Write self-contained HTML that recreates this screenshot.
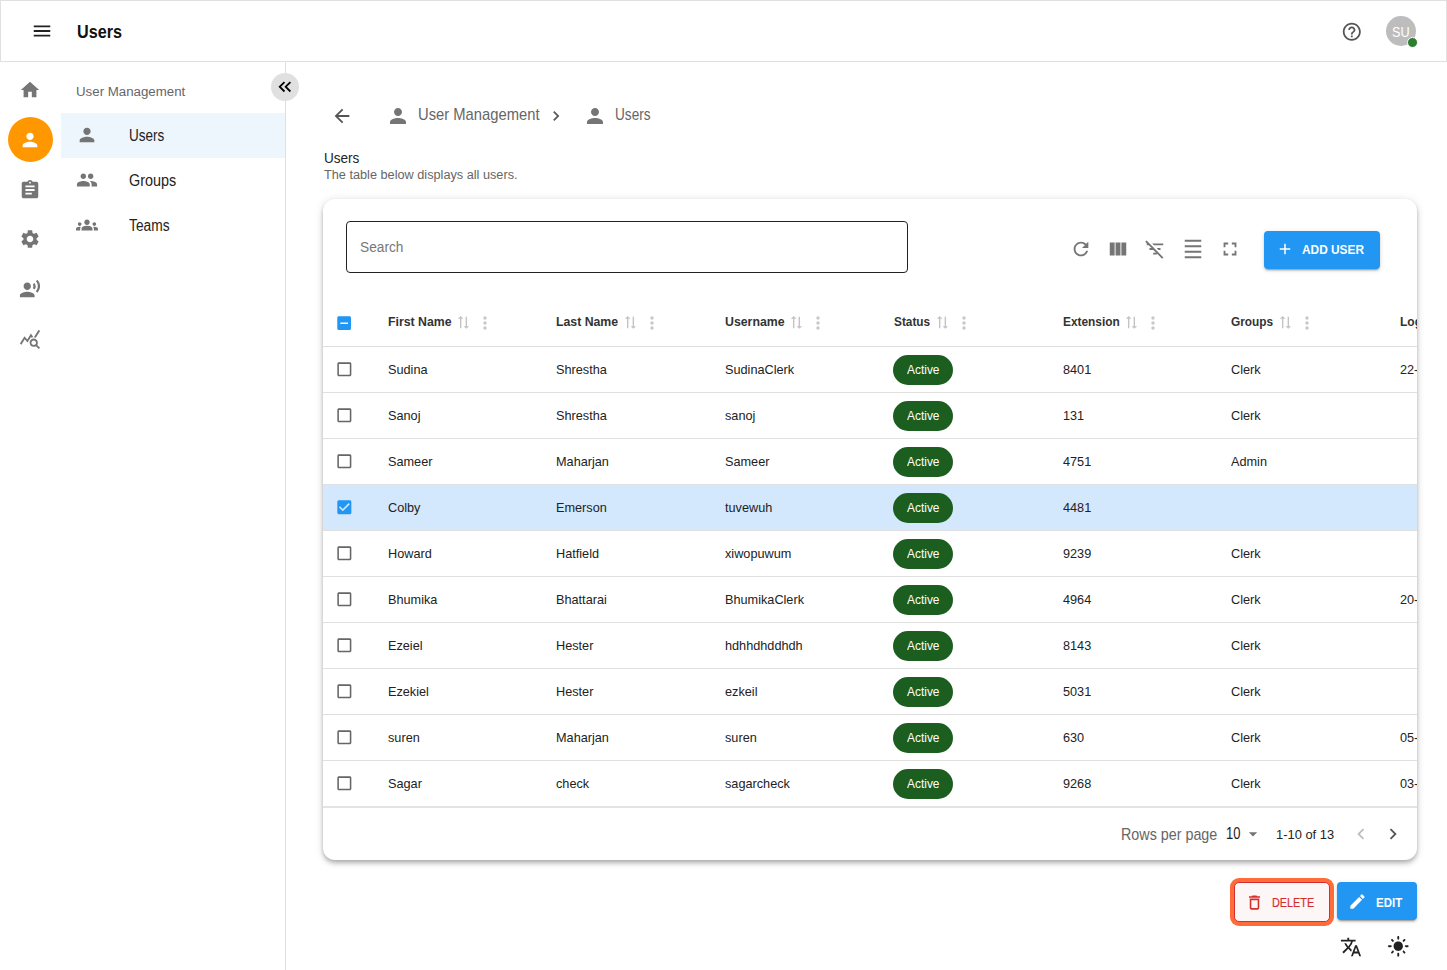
<!DOCTYPE html><html><head><meta charset="utf-8"><title>Users</title><style>
html,body{margin:0;padding:0;width:1447px;height:970px;overflow:hidden;background:#fff;}
body{font-family:"Liberation Sans",sans-serif;position:relative;}
.ic{position:absolute;display:block;}
.t{position:absolute;white-space:nowrap;}
.box{position:absolute;box-sizing:border-box;}
</style></head><body>
<div class="box" style="left:0;top:0;width:1447px;height:62px;border:1px solid #e0e0e0;"></div>
<svg class="ic" style="left:31.00px;top:20.00px;width:22px;height:22px;" viewBox="0 0 24 24"><path fill="#222" d="M3 18h18v-2H3v2zm0-5h18v-2H3v2zm0-7v2h18V6H3z"/></svg>
<div class="t" style="left:77.00px;top:23.36px;font-size:18.46px;line-height:18.46px;color:#111;font-weight:700;transform:scaleX(0.8769);transform-origin:0 0;">Users</div>
<svg class="ic" style="left:1341.20px;top:20.50px;width:21.6px;height:21.6px;" viewBox="0 0 24 24"><path fill="#555" d="M11 18h2v-2h-2v2zm1-16C6.48 2 2 6.48 2 12s4.48 10 10 10 10-4.48 10-10S17.52 2 12 2zm0 18c-4.41 0-8-3.59-8-8s3.59-8 8-8 8 3.59 8 8-3.59 8-8 8zm0-14c-2.21 0-4 1.79-4 4h2c0-1.1.9-2 2-2s2 .9 2 2c0 2-3 1.75-3 5h2c0-2.25 3-2.5 3-5 0-2.21-1.79-4-4-4z"/></svg>
<div class="box" style="left:1386px;top:16px;width:30px;height:30px;border-radius:50%;background:#bdbdbd;"></div>
<div class="t" style="left:1392.00px;top:25.32px;font-size:14.97px;line-height:14.97px;color:#fff;font-weight:400;transform:scaleX(0.8464);transform-origin:0 0;">SU</div>
<div class="box" style="left:1406.5px;top:36.5px;width:11px;height:11px;border-radius:50%;background:#2e7d32;border:1px solid #fff;"></div>
<svg class="ic" style="left:19.00px;top:79.00px;width:22px;height:22px;" viewBox="0 0 24 24"><path fill="#757575" d="M10 20v-6h4v6h5v-8h3L12 3 2 12h3v8z"/></svg>
<div class="box" style="left:8px;top:117px;width:45px;height:45px;border-radius:50%;background:#ff9800;"></div>
<svg class="ic" style="left:19.10px;top:129.20px;width:22px;height:22px;" viewBox="0 0 24 24"><path fill="#fff" d="M12 12c2.21 0 4-1.79 4-4s-1.79-4-4-4-4 1.79-4 4 1.79 4 4 4zm0 2c-2.67 0-8 1.34-8 4v2h16v-2c0-2.66-5.33-4-8-4z"/></svg>
<svg class="ic" style="left:19.10px;top:178.50px;width:22px;height:22px;" viewBox="0 0 24 24"><path fill="#757575" d="M19 3h-4.18C14.4 1.840 13.3 1 12 1c-1.3 0-2.4.84-2.82 2H5c-1.1 0-2 .9-2 2v14c0 1.1.9 2 2 2h14c1.1 0 2-.9 2-2V5c0-1.1-.9-2-2-2zm-7 0c.55 0 1 .45 1 1s-.45 1-1 1-1-.45-1-1 .45-1 1-1zm2 14H7v-2h7v2zm3-4H7v-2h10v2zm0-4H7V7h10v2z"/></svg>
<svg class="ic" style="left:19.10px;top:228.00px;width:22px;height:22px;" viewBox="0 0 24 24"><path fill="#757575" d="M19.14 12.94c.04-.3.06-.61.06-.94 0-.32-.02-.64-.07-.94l2.03-1.58c.18-.14.23-.41.12-.61l-1.92-3.32c-.12-.22-.37-.29-.59-.22l-2.39.96c-.5-.38-1.03-.7-1.62-.94l-.36-2.54c-.04-.24-.24-.41-.48-.41h-3.84c-.24 0-.43.17-.47.41l-.36 2.54c-.59.24-1.130.57-1.62.94l-2.39-.96c-.22-.08-.47 0-.59.22L2.74 8.87c-.12.21-.08.47.12.61l2.03 1.58c-.05.3-.09.63-.09.94s.02.64.07.94l-2.03 1.58c-.18.14-.23.41-.12.61l1.92 3.32c.12.22.37.29.59.22l2.39-.96c.5.38 1.03.7 1.62.94l.36 2.54c.05.24.24.41.48.41h3.84c.24 0 .44-.17.47-.41l.36-2.54c.59-.24 1.13-.56 1.62-.94l2.39.96c.22.08.47 0 .59-.22l1.92-3.32c.12-.22.07-.47-.12-.61l-2.01-1.58zM12 15.6c-1.98 0-3.6-1.62-3.6-3.6s1.62-3.6 3.6-3.6 3.6 1.62 3.6 3.6-1.62 3.6-3.6 3.6z"/></svg>
<svg class="ic" style="left:19.00px;top:278.20px;width:22px;height:22px;" viewBox="0 0 24 24"><path fill="#757575" d="M9 13c2.21 0 4-1.79 4-4s-1.79-4-4-4-4 1.79-4 4 1.79 4 4 4zm0 2c-2.67 0-8 1.34-8 4v2h16v-2c0-2.66-5.33-4-8-4zm7.76-9.64l-1.68 1.69c.84 1.18.84 2.71 0 3.89l1.68 1.69c2.02-2.02 2.02-5.07 0-7.27zM20.07 2l-1.63 1.63c2.77 3.02 2.77 7.56 0 10.74L20.07 16c3.9-3.89 3.91-9.95 0-14z"/></svg>
<svg class="ic" style="left:19.00px;top:328.20px;width:22px;height:22px;" viewBox="0 0 24 24"><path fill="#757575" d="M19.88 18.47c.44-.7.7-1.51.7-2.39 0-2.49-2.01-4.5-4.5-4.5s-4.5 2.01-4.5 4.5 2.01 4.5 4.49 4.5c.88 0 1.7-.26 2.39-.7L21.58 23 23 21.58l-3.12-3.11zm-3.8.11c-1.38 0-2.5-1.12-2.5-2.5s1.12-2.5 2.5-2.5 2.5 1.12 2.5 2.5-1.12 2.5-2.5 2.5zm-.36-8.5c-.74.02-1.45.18-2.1.45l-.55-.83-3.8 6.18-3.01-3.52-3.63 5.81L1 17l5-8 3 3.5L13 6l2.72 4.08zm2.59.5c-.64-.28-1.33-.45-2.05-.49L21.38 2 23 3.18l-4.69 7.4z"/></svg>
<div class="box" style="left:285px;top:62px;width:1px;height:908px;background:#e0e0e0;"></div>
<div class="t" style="left:76.30px;top:84.55px;font-size:13.52px;line-height:13.52px;color:#666;font-weight:400;transform:scaleX(0.9830);transform-origin:0 0;">User Management</div>
<div class="box" style="left:61px;top:113px;width:224px;height:45px;background:#edf5fd;"></div>
<svg class="ic" style="left:76.00px;top:124.00px;width:22px;height:22px;" viewBox="0 0 24 24"><path fill="#757575" d="M12 12c2.21 0 4-1.79 4-4s-1.79-4-4-4-4 1.79-4 4 1.79 4 4 4zm0 2c-2.67 0-8 1.34-8 4v2h16v-2c0-2.66-5.33-4-8-4z"/></svg>
<div class="t" style="left:128.90px;top:128.38px;font-size:15.84px;line-height:15.84px;color:#222;font-weight:400;transform:scaleX(0.8558);transform-origin:0 0;">Users</div>
<svg class="ic" style="left:76.00px;top:169.00px;width:22px;height:22px;" viewBox="0 0 24 24"><path fill="#757575" d="M16 11c1.66 0 2.99-1.34 2.99-3S17.66 5 16 5c-1.66 0-3 1.34-3 3s1.34 3 3 3zm-8 0c1.66 0 2.99-1.34 2.99-3S9.66 5 8 5C6.34 5 5 6.34 5 8s1.34 3 3 3zm0 2c-2.33 0-7 1.17-7 3.5V19h14v-2.5c0-2.33-4.67-3.5-7-3.5zm8 0c-.29 0-.62.02-.97.05 1.16.84 1.97 1.97 1.97 3.45V19h6v-2.5c0-2.33-4.67-3.5-7-3.5z"/></svg>
<div class="t" style="left:128.90px;top:173.38px;font-size:15.84px;line-height:15.84px;color:#222;font-weight:400;transform:scaleX(0.9105);transform-origin:0 0;">Groups</div>
<svg class="ic" style="left:76.00px;top:214.00px;width:22px;height:22px;" viewBox="0 0 24 24"><path fill="#757575" d="M12 12.75c1.63 0 3.07.39 4.24.9 1.08.48 1.76 1.56 1.76 2.73V18H6v-1.61c0-1.18.68-2.26 1.76-2.73 1.17-.52 2.61-.91 4.240-.91zM4 13c1.1 0 2-.9 2-2s-.9-2-2-2-2 .9-2 2 .9 2 2 2zm1.13 1.1c-.37-.06-.74-.1-1.13-.1-.99 0-1.93.21-2.78.58C.48 14.9 0 15.62 0 16.43V18h4.5v-1.61c0-.83.23-1.61.63-2.29zM20 13c1.1 0 2-.9 2-2s-.9-2-2-2-2 .9-2 2 .9 2 2 2zm4 3.43c0-.81-.48-1.53-1.22-1.85-.85-.37-1.79-.58-2.78-.58-.39 0-.76.04-1.13.1.4.68.63 1.46.63 2.29V18H24v-1.57zM12 6c1.66 0 3 1.34 3 3s-1.34 3-3 3-3-1.34-3-3 1.34-3 3-3z"/></svg>
<div class="t" style="left:129.00px;top:218.38px;font-size:15.84px;line-height:15.84px;color:#222;font-weight:400;transform:scaleX(0.8702);transform-origin:0 0;">Teams</div>
<div class="box" style="left:271px;top:73px;width:28px;height:28px;border-radius:50%;background:#e0e0e0;"></div>
<svg class="ic" style="left:274.25px;top:76.25px;width:21.5px;height:21.5px;" viewBox="0 0 24 24"><path fill="#000" d="M17.59 18 19 16.59 14.42 12 19 7.41 17.59 6l-6 6zM11 18l1.41-1.41L7.83 12l4.58-4.59L11 6l-6 6z"/></svg>
<svg class="ic" style="left:331.00px;top:105.00px;width:22px;height:22px;" viewBox="0 0 24 24"><path fill="#555" d="M20 11H7.83l5.59-5.59L12 4l-8 8 8 8 1.41-1.41L7.83 13H20v-2z"/></svg>
<svg class="ic" style="left:386.30px;top:104.20px;width:24px;height:24px;" viewBox="0 0 24 24"><path fill="#757575" d="M12 12c2.21 0 4-1.79 4-4s-1.79-4-4-4-4 1.79-4 4 1.79 4 4 4zm0 2c-2.67 0-8 1.34-8 4v2h16v-2c0-2.66-5.33-4-8-4z"/></svg>
<div class="t" style="left:417.50px;top:107.00px;font-size:15.70px;line-height:15.70px;color:#666;font-weight:400;transform:scaleX(0.9417);transform-origin:0 0;">User Management</div>
<svg class="ic" style="left:546.00px;top:106.00px;width:20px;height:20px;" viewBox="0 0 24 24"><path fill="#555" d="M10 6 8.59 7.41 13.17 12l-4.58 4.59L10 18l6-6z"/></svg>
<svg class="ic" style="left:583.00px;top:104.20px;width:24px;height:24px;" viewBox="0 0 24 24"><path fill="#757575" d="M12 12c2.21 0 4-1.79 4-4s-1.79-4-4-4-4 1.79-4 4 1.79 4 4 4zm0 2c-2.67 0-8 1.34-8 4v2h16v-2c0-2.66-5.33-4-8-4z"/></svg>
<div class="t" style="left:614.60px;top:107.00px;font-size:15.70px;line-height:15.70px;color:#666;font-weight:400;transform:scaleX(0.8686);transform-origin:0 0;">Users</div>
<div class="t" style="left:324.00px;top:150.51px;font-size:14.39px;line-height:14.39px;color:#222;font-weight:400;transform:scaleX(0.9422);transform-origin:0 0;">Users</div>
<div class="t" style="left:324.00px;top:167.52px;font-size:13.08px;line-height:13.08px;color:#666;font-weight:400;transform:scaleX(0.9717);transform-origin:0 0;">The table below displays all users.</div>
<div class="box" style="left:323px;top:199px;width:1094px;height:661px;border-radius:12px;background:#fff;box-shadow:0 2px 4px -1px rgba(0,0,0,0.2),0 4px 5px 0 rgba(0,0,0,0.14),0 1px 10px 0 rgba(0,0,0,0.12);overflow:hidden;" id="card">
<div class="box" style="left:23px;top:22px;width:562px;height:52px;border:1px solid #222;border-radius:4px;"></div>
<div class="t" style="left:36.50px;top:41.44px;font-size:14.83px;line-height:14.83px;color:#777;font-weight:400;transform:scaleX(0.9240);transform-origin:0 0;">Search</div>
<svg class="ic" style="left:746.50px;top:39.00px;width:22px;height:22px;" viewBox="0 0 24 24"><path fill="#757575" d="M17.65 6.35C16.2 4.9 14.21 4 12 4c-4.42 0-7.99 3.58-7.99 8s3.57 8 7.99 8c3.73 0 6.84-2.55 7.73-6h-2.08c-.82 2.33-3.04 4-5.65 4-3.310 0-6-2.69-6-6s2.69-6 6-6c1.66 0 3.14.69 4.22 1.78L13 11h7V4l-2.35 2.35z"/></svg>
<svg class="ic" style="left:784.00px;top:39.00px;width:22px;height:22px;" viewBox="0 0 24 24"><path fill="#757575" d="M14.67 5v14H9.33V5h5.34zm1 14H21V5h-5.33v14zm-7.34 0V5H3v14h5.33z"/></svg>
<svg class="ic" style="left:821.00px;top:39.00px;width:22px;height:22px;" viewBox="0 0 24 24"><path fill="#757575" d="M10.83 8H21V6H8.83l2 2zm5 5H18v-2h-4.17l2 2zM14 16.83V18h-4v-2h3.17l-3-3H6v-2h2.17l-3-3H3V6h.17L1.39 4.22 2.8 2.81l18.38 18.38-1.41 1.41L14 16.83z"/></svg>
<svg class="ic" style="left:859.00px;top:39.00px;width:22px;height:22px;" viewBox="0 0 24 24"><path fill="#757575" d="M3 2h18v2H3zm0 18h18v2H3zm0-6h18v2H3zm0-6h18v2H3z"/></svg>
<svg class="ic" style="left:896.00px;top:39.00px;width:22px;height:22px;" viewBox="0 0 24 24"><path fill="#757575" d="M7 14H5v5h5v-2H7v-3zm-2-4h2V7h3V5H5v5zm12 7h-3v2h5v-5h-2v3zM14 5v2h3v3h2V5h-5z"/></svg>
<div class="box" style="left:941px;top:32px;width:116px;height:38px;border-radius:4px;background:#2196f3;box-shadow:0 3px 1px -2px rgba(0,0,0,0.2),0 2px 2px 0 rgba(0,0,0,0.14),0 1px 5px 0 rgba(0,0,0,0.12);"></div>
<svg class="ic" style="left:953.00px;top:41.00px;width:18px;height:18px;" viewBox="0 0 24 24"><path fill="#fff" d="M19 13h-6v6h-2v-6H5v-2h6V5h2v6h6v2z"/></svg>
<div class="t" style="left:979.40px;top:45.19px;font-size:12.65px;line-height:12.65px;color:#fff;font-weight:700;transform:scaleX(0.9387);transform-origin:0 0;">ADD USER</div>
<svg class="ic" style="left:11.85px;top:114.65px;width:18.3px;height:18.3px;" viewBox="0 0 24 24"><path fill="#2196f3" d="M19 3H5c-1.1 0-2 .9-2 2v14c0 1.1.9 2 2 2h14c1.1 0 2-.9 2-2V5c0-1.1-.9-2-2-2zm-2 10H7v-2h10v2z"/></svg>
<div class="t" style="left:64.90px;top:116.91px;font-size:12.50px;line-height:12.50px;color:#333;font-weight:700;transform:scaleX(0.9845);transform-origin:0 0;">First Name</div>
<svg class="ic" style="left:132.00px;top:114.70px;width:17px;height:17px;transform:rotate(-90deg) scaleX(0.9);" viewBox="0 0 24 24"><path fill="#c4c4c4" d="M18 12l4-4-4-4v3H3v2h15zM6 12l-4 4 4 4v-3h15v-2H6z"/></svg>
<svg class="ic" style="left:152.10px;top:114.00px;width:20px;height:20px;" viewBox="0 0 24 24"><path fill="#c8c8c8" d="M12 8c1.1 0 2-.9 2-2s-.9-2-2-2-2 .9-2 2 .9 2 2 2zm0 2c-1.1 0-2 .9-2 2s.9 2 2 2 2-.9 2-2-.9-2-2-2zm0 6c-1.1 0-2 .9-2 2s.9 2 2 2 2-.9 2-2-.9-2-2-2z"/></svg>
<div class="t" style="left:233.40px;top:116.91px;font-size:12.50px;line-height:12.50px;color:#333;font-weight:700;transform:scaleX(0.9822);transform-origin:0 0;">Last Name</div>
<svg class="ic" style="left:299.00px;top:114.70px;width:17px;height:17px;transform:rotate(-90deg) scaleX(0.9);" viewBox="0 0 24 24"><path fill="#c4c4c4" d="M18 12l4-4-4-4v3H3v2h15zM6 12l-4 4 4 4v-3h15v-2H6z"/></svg>
<svg class="ic" style="left:319.10px;top:114.00px;width:20px;height:20px;" viewBox="0 0 24 24"><path fill="#c8c8c8" d="M12 8c1.1 0 2-.9 2-2s-.9-2-2-2-2 .9-2 2 .9 2 2 2zm0 2c-1.1 0-2 .9-2 2s.9 2 2 2 2-.9 2-2-.9-2-2-2zm0 6c-1.1 0-2 .9-2 2s.9 2 2 2 2-.9 2-2-.9-2-2-2z"/></svg>
<div class="t" style="left:401.70px;top:116.91px;font-size:12.50px;line-height:12.50px;color:#333;font-weight:700;transform:scaleX(0.9859);transform-origin:0 0;">Username</div>
<svg class="ic" style="left:464.80px;top:114.70px;width:17px;height:17px;transform:rotate(-90deg) scaleX(0.9);" viewBox="0 0 24 24"><path fill="#c4c4c4" d="M18 12l4-4-4-4v3H3v2h15zM6 12l-4 4 4 4v-3h15v-2H6z"/></svg>
<svg class="ic" style="left:484.90px;top:114.00px;width:20px;height:20px;" viewBox="0 0 24 24"><path fill="#c8c8c8" d="M12 8c1.1 0 2-.9 2-2s-.9-2-2-2-2 .9-2 2 .9 2 2 2zm0 2c-1.1 0-2 .9-2 2s.9 2 2 2 2-.9 2-2-.9-2-2-2zm0 6c-1.1 0-2 .9-2 2s.9 2 2 2 2-.9 2-2-.9-2-2-2z"/></svg>
<div class="t" style="left:570.90px;top:116.91px;font-size:12.50px;line-height:12.50px;color:#333;font-weight:700;transform:scaleX(0.9450);transform-origin:0 0;">Status</div>
<svg class="ic" style="left:610.50px;top:114.70px;width:17px;height:17px;transform:rotate(-90deg) scaleX(0.9);" viewBox="0 0 24 24"><path fill="#c4c4c4" d="M18 12l4-4-4-4v3H3v2h15zM6 12l-4 4 4 4v-3h15v-2H6z"/></svg>
<svg class="ic" style="left:630.60px;top:114.00px;width:20px;height:20px;" viewBox="0 0 24 24"><path fill="#c8c8c8" d="M12 8c1.1 0 2-.9 2-2s-.9-2-2-2-2 .9-2 2 .9 2 2 2zm0 2c-1.1 0-2 .9-2 2s.9 2 2 2 2-.9 2-2-.9-2-2-2zm0 6c-1.1 0-2 .9-2 2s.9 2 2 2 2-.9 2-2-.9-2-2-2z"/></svg>
<div class="t" style="left:739.50px;top:116.91px;font-size:12.50px;line-height:12.50px;color:#333;font-weight:700;transform:scaleX(0.9508);transform-origin:0 0;">Extension</div>
<svg class="ic" style="left:799.80px;top:114.70px;width:17px;height:17px;transform:rotate(-90deg) scaleX(0.9);" viewBox="0 0 24 24"><path fill="#c4c4c4" d="M18 12l4-4-4-4v3H3v2h15zM6 12l-4 4 4 4v-3h15v-2H6z"/></svg>
<svg class="ic" style="left:819.90px;top:114.00px;width:20px;height:20px;" viewBox="0 0 24 24"><path fill="#c8c8c8" d="M12 8c1.1 0 2-.9 2-2s-.9-2-2-2-2 .9-2 2 .9 2 2 2zm0 2c-1.1 0-2 .9-2 2s.9 2 2 2 2-.9 2-2-.9-2-2-2zm0 6c-1.1 0-2 .9-2 2s.9 2 2 2 2-.9 2-2-.9-2-2-2z"/></svg>
<div class="t" style="left:908.30px;top:116.91px;font-size:12.50px;line-height:12.50px;color:#333;font-weight:700;transform:scaleX(0.9494);transform-origin:0 0;">Groups</div>
<svg class="ic" style="left:954.00px;top:114.70px;width:17px;height:17px;transform:rotate(-90deg) scaleX(0.9);" viewBox="0 0 24 24"><path fill="#c4c4c4" d="M18 12l4-4-4-4v3H3v2h15zM6 12l-4 4 4 4v-3h15v-2H6z"/></svg>
<svg class="ic" style="left:974.10px;top:114.00px;width:20px;height:20px;" viewBox="0 0 24 24"><path fill="#c8c8c8" d="M12 8c1.1 0 2-.9 2-2s-.9-2-2-2-2 .9-2 2 .9 2 2 2zm0 2c-1.1 0-2 .9-2 2s.9 2 2 2 2-.9 2-2-.9-2-2-2zm0 6c-1.1 0-2 .9-2 2s.9 2 2 2 2-.9 2-2-.9-2-2-2z"/></svg>
<div class="t" style="left:1077.40px;top:116.91px;font-size:12.50px;line-height:12.50px;color:#333;font-weight:700;transform:scaleX(0.9600);transform-origin:0 0;">Login</div>
<div class="box" style="left:0;top:147px;width:1094px;height:1px;background:#e0e0e0;"></div>
<div class="box" style="left:0;top:193px;width:1094px;height:1px;background:#e0e0e0;"></div>
<svg class="ic" style="left:11.65px;top:161.15px;width:18.7px;height:18.7px;" viewBox="0 0 24 24"><path fill="#666" d="M19 5v14H5V5h14m0-2H5c-1.1 0-2 .9-2 2v14c0 1.1.9 2 2 2h14c1.1 0 2-.9 2-2V5c0-1.1-.9-2-2-2z"/></svg>
<div class="t" style="left:64.90px;top:163.67px;font-size:13.37px;line-height:13.37px;color:#222;font-weight:400;transform:scaleX(0.9500);transform-origin:0 0;">Sudina</div>
<div class="t" style="left:233.40px;top:163.67px;font-size:13.37px;line-height:13.37px;color:#222;font-weight:400;transform:scaleX(0.9500);transform-origin:0 0;">Shrestha</div>
<div class="t" style="left:401.70px;top:163.67px;font-size:13.37px;line-height:13.37px;color:#222;font-weight:400;transform:scaleX(0.9500);transform-origin:0 0;">SudinaClerk</div>
<div class="box" style="left:570px;top:155.5px;width:60px;height:30px;border-radius:15px;background:#1b5e20;"></div>
<div class="t" style="left:584.30px;top:164.54px;font-size:12.35px;line-height:12.35px;color:#fff;font-weight:400;transform:scaleX(0.9661);transform-origin:0 0;">Active</div>
<div class="t" style="left:739.50px;top:163.67px;font-size:13.37px;line-height:13.37px;color:#222;font-weight:400;transform:scaleX(0.9500);transform-origin:0 0;">8401</div>
<div class="t" style="left:908.30px;top:163.67px;font-size:13.37px;line-height:13.37px;color:#222;font-weight:400;transform:scaleX(0.9500);transform-origin:0 0;">Clerk</div>
<div class="t" style="left:1077.40px;top:163.67px;font-size:13.37px;line-height:13.37px;color:#222;font-weight:400;transform:scaleX(0.9500);transform-origin:0 0;">22-</div>
<div class="box" style="left:0;top:239px;width:1094px;height:1px;background:#e0e0e0;"></div>
<svg class="ic" style="left:11.65px;top:207.15px;width:18.7px;height:18.7px;" viewBox="0 0 24 24"><path fill="#666" d="M19 5v14H5V5h14m0-2H5c-1.1 0-2 .9-2 2v14c0 1.1.9 2 2 2h14c1.1 0 2-.9 2-2V5c0-1.1-.9-2-2-2z"/></svg>
<div class="t" style="left:64.90px;top:209.67px;font-size:13.37px;line-height:13.37px;color:#222;font-weight:400;transform:scaleX(0.9500);transform-origin:0 0;">Sanoj</div>
<div class="t" style="left:233.40px;top:209.67px;font-size:13.37px;line-height:13.37px;color:#222;font-weight:400;transform:scaleX(0.9500);transform-origin:0 0;">Shrestha</div>
<div class="t" style="left:401.70px;top:209.67px;font-size:13.37px;line-height:13.37px;color:#222;font-weight:400;transform:scaleX(0.9500);transform-origin:0 0;">sanoj</div>
<div class="box" style="left:570px;top:201.5px;width:60px;height:30px;border-radius:15px;background:#1b5e20;"></div>
<div class="t" style="left:584.30px;top:210.54px;font-size:12.35px;line-height:12.35px;color:#fff;font-weight:400;transform:scaleX(0.9661);transform-origin:0 0;">Active</div>
<div class="t" style="left:739.50px;top:209.67px;font-size:13.37px;line-height:13.37px;color:#222;font-weight:400;transform:scaleX(0.9500);transform-origin:0 0;">131</div>
<div class="t" style="left:908.30px;top:209.67px;font-size:13.37px;line-height:13.37px;color:#222;font-weight:400;transform:scaleX(0.9500);transform-origin:0 0;">Clerk</div>
<div class="box" style="left:0;top:285px;width:1094px;height:1px;background:#e0e0e0;"></div>
<svg class="ic" style="left:11.65px;top:253.15px;width:18.7px;height:18.7px;" viewBox="0 0 24 24"><path fill="#666" d="M19 5v14H5V5h14m0-2H5c-1.1 0-2 .9-2 2v14c0 1.1.9 2 2 2h14c1.1 0 2-.9 2-2V5c0-1.1-.9-2-2-2z"/></svg>
<div class="t" style="left:64.90px;top:255.67px;font-size:13.37px;line-height:13.37px;color:#222;font-weight:400;transform:scaleX(0.9500);transform-origin:0 0;">Sameer</div>
<div class="t" style="left:233.40px;top:255.67px;font-size:13.37px;line-height:13.37px;color:#222;font-weight:400;transform:scaleX(0.9500);transform-origin:0 0;">Maharjan</div>
<div class="t" style="left:401.70px;top:255.67px;font-size:13.37px;line-height:13.37px;color:#222;font-weight:400;transform:scaleX(0.9500);transform-origin:0 0;">Sameer</div>
<div class="box" style="left:570px;top:247.5px;width:60px;height:30px;border-radius:15px;background:#1b5e20;"></div>
<div class="t" style="left:584.30px;top:256.54px;font-size:12.35px;line-height:12.35px;color:#fff;font-weight:400;transform:scaleX(0.9661);transform-origin:0 0;">Active</div>
<div class="t" style="left:739.50px;top:255.67px;font-size:13.37px;line-height:13.37px;color:#222;font-weight:400;transform:scaleX(0.9500);transform-origin:0 0;">4751</div>
<div class="t" style="left:908.30px;top:255.67px;font-size:13.37px;line-height:13.37px;color:#222;font-weight:400;transform:scaleX(0.9500);transform-origin:0 0;">Admin</div>
<div class="box" style="left:0;top:286px;width:1094px;height:45px;background:#d3e8fc;"></div>
<div class="box" style="left:0;top:331px;width:1094px;height:1px;background:#e0e0e0;"></div>
<svg class="ic" style="left:11.65px;top:299.15px;width:18.7px;height:18.7px;" viewBox="0 0 24 24"><path fill="#2196f3" d="M19 3H5c-1.11 0-2 .9-2 2v14c0 1.1.89 2 2 2h14c1.11 0 2-.9 2-2V5c0-1.1-.89-2-2-2zm-9 14l-5-5 1.41-1.41L10 14.17l7.59-7.59L19 8l-9 9z"/></svg>
<div class="t" style="left:64.90px;top:301.67px;font-size:13.37px;line-height:13.37px;color:#222;font-weight:400;transform:scaleX(0.9500);transform-origin:0 0;">Colby</div>
<div class="t" style="left:233.40px;top:301.67px;font-size:13.37px;line-height:13.37px;color:#222;font-weight:400;transform:scaleX(0.9500);transform-origin:0 0;">Emerson</div>
<div class="t" style="left:401.70px;top:301.67px;font-size:13.37px;line-height:13.37px;color:#222;font-weight:400;transform:scaleX(0.9500);transform-origin:0 0;">tuvewuh</div>
<div class="box" style="left:570px;top:293.5px;width:60px;height:30px;border-radius:15px;background:#1b5e20;"></div>
<div class="t" style="left:584.30px;top:302.54px;font-size:12.35px;line-height:12.35px;color:#fff;font-weight:400;transform:scaleX(0.9661);transform-origin:0 0;">Active</div>
<div class="t" style="left:739.50px;top:301.67px;font-size:13.37px;line-height:13.37px;color:#222;font-weight:400;transform:scaleX(0.9500);transform-origin:0 0;">4481</div>
<div class="box" style="left:0;top:377px;width:1094px;height:1px;background:#e0e0e0;"></div>
<svg class="ic" style="left:11.65px;top:345.15px;width:18.7px;height:18.7px;" viewBox="0 0 24 24"><path fill="#666" d="M19 5v14H5V5h14m0-2H5c-1.1 0-2 .9-2 2v14c0 1.1.9 2 2 2h14c1.1 0 2-.9 2-2V5c0-1.1-.9-2-2-2z"/></svg>
<div class="t" style="left:64.90px;top:347.67px;font-size:13.37px;line-height:13.37px;color:#222;font-weight:400;transform:scaleX(0.9500);transform-origin:0 0;">Howard</div>
<div class="t" style="left:233.40px;top:347.67px;font-size:13.37px;line-height:13.37px;color:#222;font-weight:400;transform:scaleX(0.9500);transform-origin:0 0;">Hatfield</div>
<div class="t" style="left:401.70px;top:347.67px;font-size:13.37px;line-height:13.37px;color:#222;font-weight:400;transform:scaleX(0.9500);transform-origin:0 0;">xiwopuwum</div>
<div class="box" style="left:570px;top:339.5px;width:60px;height:30px;border-radius:15px;background:#1b5e20;"></div>
<div class="t" style="left:584.30px;top:348.54px;font-size:12.35px;line-height:12.35px;color:#fff;font-weight:400;transform:scaleX(0.9661);transform-origin:0 0;">Active</div>
<div class="t" style="left:739.50px;top:347.67px;font-size:13.37px;line-height:13.37px;color:#222;font-weight:400;transform:scaleX(0.9500);transform-origin:0 0;">9239</div>
<div class="t" style="left:908.30px;top:347.67px;font-size:13.37px;line-height:13.37px;color:#222;font-weight:400;transform:scaleX(0.9500);transform-origin:0 0;">Clerk</div>
<div class="box" style="left:0;top:423px;width:1094px;height:1px;background:#e0e0e0;"></div>
<svg class="ic" style="left:11.65px;top:391.15px;width:18.7px;height:18.7px;" viewBox="0 0 24 24"><path fill="#666" d="M19 5v14H5V5h14m0-2H5c-1.1 0-2 .9-2 2v14c0 1.1.9 2 2 2h14c1.1 0 2-.9 2-2V5c0-1.1-.9-2-2-2z"/></svg>
<div class="t" style="left:64.90px;top:393.67px;font-size:13.37px;line-height:13.37px;color:#222;font-weight:400;transform:scaleX(0.9500);transform-origin:0 0;">Bhumika</div>
<div class="t" style="left:233.40px;top:393.67px;font-size:13.37px;line-height:13.37px;color:#222;font-weight:400;transform:scaleX(0.9500);transform-origin:0 0;">Bhattarai</div>
<div class="t" style="left:401.70px;top:393.67px;font-size:13.37px;line-height:13.37px;color:#222;font-weight:400;transform:scaleX(0.9500);transform-origin:0 0;">BhumikaClerk</div>
<div class="box" style="left:570px;top:385.5px;width:60px;height:30px;border-radius:15px;background:#1b5e20;"></div>
<div class="t" style="left:584.30px;top:394.54px;font-size:12.35px;line-height:12.35px;color:#fff;font-weight:400;transform:scaleX(0.9661);transform-origin:0 0;">Active</div>
<div class="t" style="left:739.50px;top:393.67px;font-size:13.37px;line-height:13.37px;color:#222;font-weight:400;transform:scaleX(0.9500);transform-origin:0 0;">4964</div>
<div class="t" style="left:908.30px;top:393.67px;font-size:13.37px;line-height:13.37px;color:#222;font-weight:400;transform:scaleX(0.9500);transform-origin:0 0;">Clerk</div>
<div class="t" style="left:1077.40px;top:393.67px;font-size:13.37px;line-height:13.37px;color:#222;font-weight:400;transform:scaleX(0.9500);transform-origin:0 0;">20-</div>
<div class="box" style="left:0;top:469px;width:1094px;height:1px;background:#e0e0e0;"></div>
<svg class="ic" style="left:11.65px;top:437.15px;width:18.7px;height:18.7px;" viewBox="0 0 24 24"><path fill="#666" d="M19 5v14H5V5h14m0-2H5c-1.1 0-2 .9-2 2v14c0 1.1.9 2 2 2h14c1.1 0 2-.9 2-2V5c0-1.1-.9-2-2-2z"/></svg>
<div class="t" style="left:64.90px;top:439.67px;font-size:13.37px;line-height:13.37px;color:#222;font-weight:400;transform:scaleX(0.9500);transform-origin:0 0;">Ezeiel</div>
<div class="t" style="left:233.40px;top:439.67px;font-size:13.37px;line-height:13.37px;color:#222;font-weight:400;transform:scaleX(0.9500);transform-origin:0 0;">Hester</div>
<div class="t" style="left:401.70px;top:439.67px;font-size:13.37px;line-height:13.37px;color:#222;font-weight:400;transform:scaleX(0.9500);transform-origin:0 0;">hdhhdhddhdh</div>
<div class="box" style="left:570px;top:431.5px;width:60px;height:30px;border-radius:15px;background:#1b5e20;"></div>
<div class="t" style="left:584.30px;top:440.54px;font-size:12.35px;line-height:12.35px;color:#fff;font-weight:400;transform:scaleX(0.9661);transform-origin:0 0;">Active</div>
<div class="t" style="left:739.50px;top:439.67px;font-size:13.37px;line-height:13.37px;color:#222;font-weight:400;transform:scaleX(0.9500);transform-origin:0 0;">8143</div>
<div class="t" style="left:908.30px;top:439.67px;font-size:13.37px;line-height:13.37px;color:#222;font-weight:400;transform:scaleX(0.9500);transform-origin:0 0;">Clerk</div>
<div class="box" style="left:0;top:515px;width:1094px;height:1px;background:#e0e0e0;"></div>
<svg class="ic" style="left:11.65px;top:483.15px;width:18.7px;height:18.7px;" viewBox="0 0 24 24"><path fill="#666" d="M19 5v14H5V5h14m0-2H5c-1.1 0-2 .9-2 2v14c0 1.1.9 2 2 2h14c1.1 0 2-.9 2-2V5c0-1.1-.9-2-2-2z"/></svg>
<div class="t" style="left:64.90px;top:485.67px;font-size:13.37px;line-height:13.37px;color:#222;font-weight:400;transform:scaleX(0.9500);transform-origin:0 0;">Ezekiel</div>
<div class="t" style="left:233.40px;top:485.67px;font-size:13.37px;line-height:13.37px;color:#222;font-weight:400;transform:scaleX(0.9500);transform-origin:0 0;">Hester</div>
<div class="t" style="left:401.70px;top:485.67px;font-size:13.37px;line-height:13.37px;color:#222;font-weight:400;transform:scaleX(0.9500);transform-origin:0 0;">ezkeil</div>
<div class="box" style="left:570px;top:477.5px;width:60px;height:30px;border-radius:15px;background:#1b5e20;"></div>
<div class="t" style="left:584.30px;top:486.54px;font-size:12.35px;line-height:12.35px;color:#fff;font-weight:400;transform:scaleX(0.9661);transform-origin:0 0;">Active</div>
<div class="t" style="left:739.50px;top:485.67px;font-size:13.37px;line-height:13.37px;color:#222;font-weight:400;transform:scaleX(0.9500);transform-origin:0 0;">5031</div>
<div class="t" style="left:908.30px;top:485.67px;font-size:13.37px;line-height:13.37px;color:#222;font-weight:400;transform:scaleX(0.9500);transform-origin:0 0;">Clerk</div>
<div class="box" style="left:0;top:561px;width:1094px;height:1px;background:#e0e0e0;"></div>
<svg class="ic" style="left:11.65px;top:529.15px;width:18.7px;height:18.7px;" viewBox="0 0 24 24"><path fill="#666" d="M19 5v14H5V5h14m0-2H5c-1.1 0-2 .9-2 2v14c0 1.1.9 2 2 2h14c1.1 0 2-.9 2-2V5c0-1.1-.9-2-2-2z"/></svg>
<div class="t" style="left:64.90px;top:531.67px;font-size:13.37px;line-height:13.37px;color:#222;font-weight:400;transform:scaleX(0.9500);transform-origin:0 0;">suren</div>
<div class="t" style="left:233.40px;top:531.67px;font-size:13.37px;line-height:13.37px;color:#222;font-weight:400;transform:scaleX(0.9500);transform-origin:0 0;">Maharjan</div>
<div class="t" style="left:401.70px;top:531.67px;font-size:13.37px;line-height:13.37px;color:#222;font-weight:400;transform:scaleX(0.9500);transform-origin:0 0;">suren</div>
<div class="box" style="left:570px;top:523.5px;width:60px;height:30px;border-radius:15px;background:#1b5e20;"></div>
<div class="t" style="left:584.30px;top:532.54px;font-size:12.35px;line-height:12.35px;color:#fff;font-weight:400;transform:scaleX(0.9661);transform-origin:0 0;">Active</div>
<div class="t" style="left:739.50px;top:531.67px;font-size:13.37px;line-height:13.37px;color:#222;font-weight:400;transform:scaleX(0.9500);transform-origin:0 0;">630</div>
<div class="t" style="left:908.30px;top:531.67px;font-size:13.37px;line-height:13.37px;color:#222;font-weight:400;transform:scaleX(0.9500);transform-origin:0 0;">Clerk</div>
<div class="t" style="left:1077.40px;top:531.67px;font-size:13.37px;line-height:13.37px;color:#222;font-weight:400;transform:scaleX(0.9500);transform-origin:0 0;">05-</div>
<div class="box" style="left:0;top:607px;width:1094px;height:2px;background:#e3e3e3;"></div>
<svg class="ic" style="left:11.65px;top:575.15px;width:18.7px;height:18.7px;" viewBox="0 0 24 24"><path fill="#666" d="M19 5v14H5V5h14m0-2H5c-1.1 0-2 .9-2 2v14c0 1.1.9 2 2 2h14c1.1 0 2-.9 2-2V5c0-1.1-.9-2-2-2z"/></svg>
<div class="t" style="left:64.90px;top:577.67px;font-size:13.37px;line-height:13.37px;color:#222;font-weight:400;transform:scaleX(0.9500);transform-origin:0 0;">Sagar</div>
<div class="t" style="left:233.40px;top:577.67px;font-size:13.37px;line-height:13.37px;color:#222;font-weight:400;transform:scaleX(0.9500);transform-origin:0 0;">check</div>
<div class="t" style="left:401.70px;top:577.67px;font-size:13.37px;line-height:13.37px;color:#222;font-weight:400;transform:scaleX(0.9500);transform-origin:0 0;">sagarcheck</div>
<div class="box" style="left:570px;top:569.5px;width:60px;height:30px;border-radius:15px;background:#1b5e20;"></div>
<div class="t" style="left:584.30px;top:578.54px;font-size:12.35px;line-height:12.35px;color:#fff;font-weight:400;transform:scaleX(0.9661);transform-origin:0 0;">Active</div>
<div class="t" style="left:739.50px;top:577.67px;font-size:13.37px;line-height:13.37px;color:#222;font-weight:400;transform:scaleX(0.9500);transform-origin:0 0;">9268</div>
<div class="t" style="left:908.30px;top:577.67px;font-size:13.37px;line-height:13.37px;color:#222;font-weight:400;transform:scaleX(0.9500);transform-origin:0 0;">Clerk</div>
<div class="t" style="left:1077.40px;top:577.67px;font-size:13.37px;line-height:13.37px;color:#222;font-weight:400;transform:scaleX(0.9500);transform-origin:0 0;">03-</div>
<div class="t" style="left:797.50px;top:627.96px;font-size:15.99px;line-height:15.99px;color:#666;font-weight:400;transform:scaleX(0.8955);transform-origin:0 0;">Rows per page</div>
<div class="t" style="left:902.90px;top:626.01px;font-size:16.28px;line-height:16.28px;color:#222;font-weight:400;transform:scaleX(0.7955);transform-origin:0 0;">10</div>
<svg class="ic" style="left:919.50px;top:625.00px;width:20px;height:20px;" viewBox="0 0 24 24"><path fill="#757575" d="M7 10l5 5 5-5z"/></svg>
<div class="t" style="left:952.60px;top:628.60px;font-size:13.23px;line-height:13.23px;color:#222;font-weight:400;transform:scaleX(0.9755);transform-origin:0 0;">1-10 of 13</div>
<svg class="ic" style="left:1027.00px;top:624.00px;width:22px;height:22px;" viewBox="0 0 24 24"><path fill="#bdbdbd" d="M15.41 7.41 14 6l-6 6 6 6 1.41-1.41L10.83 12z"/></svg>
<svg class="ic" style="left:1059.00px;top:624.00px;width:22px;height:22px;" viewBox="0 0 24 24"><path fill="#555" d="M10 6 8.59 7.41 13.17 12l-4.58 4.59L10 18l6-6z"/></svg>
</div>
<div class="box" style="left:1230px;top:878px;width:104px;height:48px;border-radius:9px;background:#ff6c3a;"></div>
<div class="box" style="left:1234px;top:882px;width:96px;height:40px;border-radius:5px;border:1px solid #d32f2f;background:#fdf6f6;"></div>
<svg class="ic" style="left:1245.00px;top:892.80px;width:19px;height:19px;" viewBox="0 0 24 24"><path fill="#d32f2f" d="M6 19c0 1.1.9 2 2 2h8c1.1 0 2-.9 2-2V7H6v12zM8 9h8v10H8V9zm7.5-5-1-1h-5l-1 1H5v2h14V4z"/></svg>
<div class="t" style="left:1272.20px;top:897.41px;font-size:12.50px;line-height:12.50px;color:#d32f2f;font-weight:400;transform:scaleX(0.8679);transform-origin:0 0;-webkit-text-stroke:0.2px #d32f2f;">DELETE</div>
<div class="box" style="left:1337px;top:882px;width:80px;height:38px;border-radius:4px;background:#2196f3;box-shadow:0 3px 1px -2px rgba(0,0,0,0.2),0 2px 2px 0 rgba(0,0,0,0.14),0 1px 5px 0 rgba(0,0,0,0.12);"></div>
<svg class="ic" style="left:1347.80px;top:891.70px;width:19px;height:19px;" viewBox="0 0 24 24"><path fill="#fff" d="M3 17.25V21h3.75L17.81 9.94l-3.75-3.75L3 17.25zM20.71 7.04c.39-.39.39-1.02 0-1.41l-2.34-2.34a.9959.9959 0 0 0-1.41 0l-1.83 1.83 3.75 3.75 1.83-1.83z"/></svg>
<div class="t" style="left:1375.70px;top:897.29px;font-size:12.65px;line-height:12.65px;color:#fff;font-weight:700;transform:scaleX(0.9095);transform-origin:0 0;">EDIT</div>
<svg class="ic" style="left:1340.00px;top:935.50px;width:22px;height:22px;" viewBox="0 0 24 24"><path fill="#222" d="M12.87 15.07l-2.54-2.51.03-.03c1.74-1.94 2.98-4.17 3.71-6.53H17V4h-7V2H8v2H1v1.99h11.17C11.5 7.92 10.44 9.75 9 11.35 8.07 10.32 7.3 9.19 6.69 8h-2c.73 1.63 1.73 3.17 2.98 4.56l-5.09 5.02L4 19l5-5 3.11 3.11.76-2.04zM18.5 10h-2L12 22h2l1.12-3h4.75L21 22h2l-4.5-12zm-2.62 7l1.62-4.33L19.12 17h-3.24z"/></svg>
<svg class="ic" style="left:1387.05px;top:934.75px;width:22.5px;height:22.5px;" viewBox="0 0 24 24"><path fill="#222" d="M12 7c-2.76 0-5 2.24-5 5s2.24 5 5 5 5-2.24 5-5-2.24-5-5-5zM2 13h2c.55 0 1-.45 1-1s-.45-1-1-1H2c-.55 0-1 .45-1 1s.45 1 1 1zm18 0h2c.55 0 1-.45 1-1s-.45-1-1-1h-2c-.55 0-1 .45-1 1s.45 1 1 1zM11 2v2c0 .55.45 1 1 1s1-.45 1-1V2c0-.55-.45-1-1-1s-1 .45-1 1zm0 18v2c0 .55.45 1 1 1s1-.45 1-1v-2c0-.55-.45-1-1-1s-1 .45-1 1zM5.99 4.58c-.39-.39-1.03-.39-1.41 0-.39.39-.39 1.03 0 1.41l1.06 1.06c.39.39 1.03.39 1.41 0s.39-1.03 0-1.41L5.99 4.58zm12.37 12.37c-.39-.39-1.03-.39-1.41 0-.39.39-.39 1.03 0 1.41l1.06 1.06c.39.39 1.03.39 1.41 0 .39-.39.39-1.03 0-1.41l-1.06-1.06zm1.06-10.96c.39-.39.39-1.03 0-1.41-.39-.39-1.03-.39-1.41 0l-1.06 1.06c-.39.39-.39 1.03 0 1.41s1.03.39 1.41 0l1.06-1.06zM7.05 18.36c.39-.39.39-1.03 0-1.41-.39-.39-1.03-.39-1.41 0l-1.06 1.06c-.39.39-.39 1.03 0 1.41s1.03.39 1.41 0l1.06-1.06z"/></svg>
</body></html>
